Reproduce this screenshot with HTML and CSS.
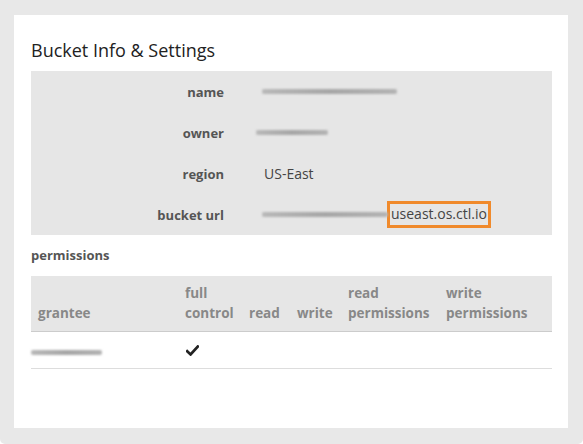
FILE: index.html
```html
<!DOCTYPE html>
<html>
<head>
<meta charset="utf-8">
<link rel="stylesheet" href="styles.css">
</head>
<body>
<div class="frame">
  <div class="card">
    <h1 class="title">Bucket Info &amp; Settings</h1>
    <div class="info">
      <div class="label">name</div>
      <div class="value"><span class="blur" style="width:135px"></span></div>
      <div class="label">owner</div>
      <div class="value shift"><span class="blur" style="width:72px"></span></div>
      <div class="label">region</div>
      <div class="value text">US-East</div>
      <div class="label">bucket url</div>
      <div class="value"><span class="blur" style="width:126px"></span><span class="url">useast.os.ctl.io</span></div>
    </div>
    <div class="section">permissions</div>
    <table class="perms">
      <thead>
        <tr>
          <th class="c-grantee">grantee</th>
          <th class="c-full">full<br>control</th>
          <th class="c-read">read</th>
          <th class="c-write">write</th>
          <th class="c-rp">read<br>permissions</th>
          <th class="c-wp">write<br>permissions</th>
        </tr>
      </thead>
      <tbody>
        <tr>
          <td class="c-grantee first"><span class="blur" style="width:71px"></span></td>
          <td class="c-full"><svg class="check" width="13" height="11" viewBox="0 0 13 11"><path d="M1.2 6.2 L4.6 9.4 L11.8 1.6" fill="none" stroke="#222" stroke-width="2.8" stroke-linecap="square" stroke-linejoin="miter"/></svg></td>
          <td></td>
          <td></td>
          <td></td>
          <td></td>
        </tr>
      </tbody>
    </table>
  </div>
</div>
</body>
</html>
```
FILE: styles.css
```css
html, body {
  margin: 0;
  padding: 0;
  background: #ffffff;
}
body {
  font-family: "Open Sans", "Liberation Sans", sans-serif;
  color: #333;
}
.frame {
  width: 583px;
  height: 444px;
  box-sizing: border-box;
  background: #e8e8e8;
  border-radius: 0 0 5px 5px;
  padding: 15px 15px 16px 14px;
}
.card {
  background: #fff;
  height: 100%;
  box-sizing: border-box;
  padding: 24px 16px 0 17px;
}
.title {
  margin: 0;
  font-size: 18px;
  font-weight: 400;
  color: #222;
  line-height: 22px;
  height: 32px;
}
.info {
  background: #e6e6e6;
  display: grid;
  grid-template-columns: 193px 1fr;
  column-gap: 38px;
  grid-auto-rows: 41px;
  align-items: center;
  height: 164px;
}
.label {
  text-align: right;
  font-weight: 700;
  font-size: 13px;
  color: #555;
}
.value {
  display: flex;
  align-items: center;
  font-size: 14px;
  color: #444;
}
.value.shift {
  margin-left: -6px;
}
.value.text {
  margin-left: 2px;
}
.blur {
  display: inline-block;
  height: 5px;
  background: linear-gradient(90deg, #b8b8b8, #a6a6a6 50%, #b3b3b3);
  filter: blur(1px);
  border-radius: 2px;
}
.url {
  border: 3px solid #f08a2c;
  padding: 1px 1px 2px 1px;
  margin-left: -1px;
  font-size: 14px;
  color: #444;
  line-height: 18px;
}
.section {
  font-weight: 700;
  font-size: 13px;
  color: #555;
  height: 41px;
  line-height: 40px;
}
.perms {
  width: 521px;
  border-collapse: collapse;
  font-size: 13.5px;
}
.perms th {
  background: #e6e6e6;
  color: #888;
  font-weight: 700;
  text-align: left;
  vertical-align: bottom;
  line-height: 20px;
  padding: 7px 0 8px 0;
  border-bottom: 1px solid #ccc;
  white-space: nowrap;
}
.perms td {
  height: 36px;
  padding: 0;
  border-bottom: 1px solid #ddd;
  vertical-align: middle;
}
.c-grantee { width: 147px; padding-left: 7px !important; }
.perms td.first { padding-left: 0 !important; width: 154px; }
.c-full { width: 64px; }
.c-read { width: 48px; }
.c-write { width: 51px; }
.c-rp { width: 98px; }
.check {
  display: block;
  margin-left: 1px;
}
```
